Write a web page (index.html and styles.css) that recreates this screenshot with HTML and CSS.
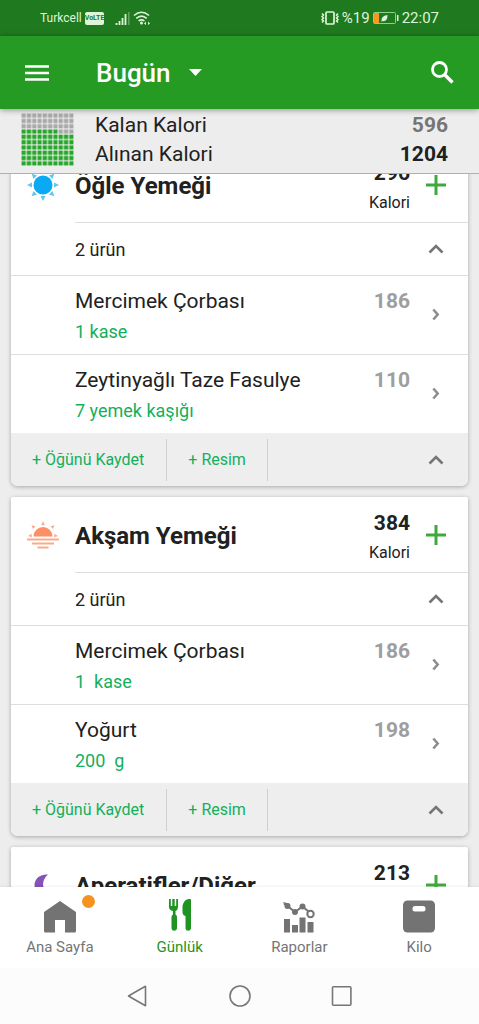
FILE: index.html
```html
<!DOCTYPE html>
<html lang="tr">
<head>
<meta charset="utf-8">
<meta name="viewport" content="width=device-width, initial-scale=1">
<title>Bugün</title>
<link rel="stylesheet" href="styles.css">
</head>
<body>
<svg class="defs" aria-hidden="true">
  <symbol id="up" viewBox="0 0 16 10"><path d="M1.500 8.500 8 2l6.500 6.500" fill="none" stroke="currentColor" stroke-width="2.600"/></symbol>
  <symbol id="next" viewBox="0 0 8 13"><path d="M1.300 1.500 5.700 6.500l-4.400 5" fill="none" stroke="currentColor" stroke-width="2.500"/></symbol>
  <symbol id="plus" viewBox="0 0 20 20"><path d="M10 0v20M0 10h20" fill="none" stroke="currentColor" stroke-width="3"/></symbol>
</svg>

<div class="status">
  <div class="status-group">
    <span class="carrier">Turkcell</span>
    <span class="volte">VoLTE</span>
    <svg class="signal" width="15" height="14" viewBox="0 0 15 14"><path d="M1.500 14v-2M4.500 14v-4M7.500 14V7M10.500 14V3" stroke="#dff5d8" stroke-width="1.800"/><path d="M13.800 14V1" stroke="#6aa668" stroke-width="1.400"/></svg>
    <svg class="wifi" width="17" height="14" viewBox="0 0 17 14"><g fill="none" stroke="#dff5d8" stroke-width="1.600"><path d="M1 4.500q7.500-6.500 15 0M3.300 7.400q5.200-4.600 10.400 0M5.600 10q2.900-2.400 5.800 0"/></g><circle cx="8.500" cy="12" r="1.500" fill="#dff5d8"/><path d="M11 12.500 13 10.500v3.500zM17 12.500 15 10.500v3.500z" fill="#dff5d8"/></svg>
  </div>
  <div class="status-group clock">
    <svg width="18" height="14" viewBox="0 0 18 14"><rect x="5" y="1" width="8" height="12" rx="1" fill="none" stroke="#dff5d8" stroke-width="1.700"/><path d="M1 2.500l1.500 1.500L1 5.500 2.500 7 1 8.500 2.500 10 1 11.500M17 2.500 15.500 4 17 5.500 15.500 7 17 8.500 15.500 10 17 11.500" fill="none" stroke="#dff5d8" stroke-width="1.500"/></svg>
    <span>%19</span>
    <svg class="battery" width="26" height="12" viewBox="0 0 26 12"><rect x=".5" y=".5" width="22" height="11" rx="1" fill="none" stroke="#8fce8b"/><rect x="1" y="1" width="5" height="10" fill="#f39a22"/><path d="M8.500 10q-1-6 6-7 0 7-5 6z" fill="#dff5d8"/><path d="M24.700 3v6" stroke="#dff5d8" stroke-width="1.500"/></svg>
    <span>22:07</span>
  </div>
</div>

<header class="appbar">
  <button class="plain" aria-label="Menü"><svg width="24" height="16" viewBox="0 0 24 16"><path d="M0 1.500h24M0 8h24M0 14.500h24" stroke="#fff" stroke-width="2.600"/></svg></button>
  <button class="plain day">Bugün <svg width="13" height="7" viewBox="0 0 13 7"><path d="M0 0h13L6.500 7z" fill="#fff"/></svg></button>
  <button class="plain search" aria-label="Ara"><svg width="23" height="23" viewBox="0 0 23 23"><circle cx="8.500" cy="8.500" r="7" fill="none" stroke="#fff" stroke-width="2.800"/><path d="M13.500 13.500l8 8" stroke="#fff" stroke-width="3.400"/></svg></button>
</header>

<section class="summary">
  <svg width="53" height="53" viewBox="0 0 100 100">
    <defs>
      <pattern id="left" width="10" height="10" patternUnits="userSpaceOnUse"><rect x="1" y="1" width="8" height="8" fill="#a9a9a9"/></pattern>
      <pattern id="eaten" width="10" height="10" patternUnits="userSpaceOnUse"><rect x="1" y="1" width="8" height="8" fill="#27a82a"/></pattern>
    </defs>
    <path d="M0 0h100v40H70V30H0z" fill="url(#left)"/>
    <path d="M0 30h70v10h30v60H0z" fill="url(#eaten)"/>
  </svg>
  <dl class="totals">
    <div><dt>Kalan Kalori</dt><dd class="remaining">596</dd></div>
    <div><dt>Alınan Kalori</dt><dd>1204</dd></div>
  </dl>
</section>

<main class="diary">
  <div class="cards">
    <article class="card">
      <header class="meal">
        <span class="meal-icon"><svg width="32" height="32" viewBox="-16 -16 32 32"><circle r="9.500" fill="#0aa9f4"/><g fill="#62c5ee"><path id="ray" d="M-2.500-11h5L0-16z"/><use href="#ray" transform="rotate(45)"/><use href="#ray" transform="rotate(90)"/><use href="#ray" transform="rotate(135)"/><use href="#ray" transform="rotate(180)"/><use href="#ray" transform="rotate(225)"/><use href="#ray" transform="rotate(270)"/><use href="#ray" transform="rotate(315)"/></g></svg></span>
        <div class="meal-main"><h2>Öğle Yemeği</h2><p class="kcal"><b>296</b>Kalori</p><button class="plain action add" aria-label="Ekle"><svg width="20" height="20"><use href="#plus"/></svg></button></div>
      </header>
      <div class="count"><span>2 ürün</span><button class="plain action" aria-label="Daralt"><svg width="16" height="10"><use href="#up"/></svg></button></div>
      <a class="food" href="#"><span class="name">Mercimek Çorbası</span><span class="value">186</span><span class="portion">1 kase</span><svg class="next" width="8" height="13"><use href="#next"/></svg></a>
      <a class="food" href="#"><span class="name">Zeytinyağlı Taze Fasulye</span><span class="value">110</span><span class="portion">7 yemek kaşığı</span><svg class="next" width="8" height="13"><use href="#next"/></svg></a>
      <footer class="tools"><button class="plain save">+ Öğünü Kaydet</button><button class="plain photo">+ Resim</button><button class="plain action" aria-label="Kapat"><svg width="16" height="10"><use href="#up"/></svg></button></footer>
    </article>

    <article class="card">
      <header class="meal">
        <span class="meal-icon"><svg width="32" height="28" viewBox="0 0 32 28"><path d="M6.500 15.500a9.500 9.500 0 0 1 19 0z" fill="#ff8f66"/><path d="M0 18.500h32M5 22.500h22M10.500 26.500h11" stroke="#f8ab8e" stroke-width="1.800"/><g fill="#f8ab8e"><path d="M14.200 4.300h3.600L16 0zM5.900 8.100l2.500-2.500L4.500 4zM26.100 8.100l-2.500-2.500L27.500 4zM4.700 12.800v3.400L1 15zM27.300 12.800v3.400L31 15z"/></g></svg></span>
        <div class="meal-main"><h2>Akşam Yemeği</h2><p class="kcal"><b>384</b>Kalori</p><button class="plain action add" aria-label="Ekle"><svg width="20" height="20"><use href="#plus"/></svg></button></div>
      </header>
      <div class="count"><span>2 ürün</span><button class="plain action" aria-label="Daralt"><svg width="16" height="10"><use href="#up"/></svg></button></div>
      <a class="food" href="#"><span class="name">Mercimek Çorbası</span><span class="value">186</span><span class="portion">1&nbsp; kase</span><svg class="next" width="8" height="13"><use href="#next"/></svg></a>
      <a class="food" href="#"><span class="name">Yoğurt</span><span class="value">198</span><span class="portion">200&nbsp; g</span><svg class="next" width="8" height="13"><use href="#next"/></svg></a>
      <footer class="tools"><button class="plain save">+ Öğünü Kaydet</button><button class="plain photo">+ Resim</button><button class="plain action" aria-label="Kapat"><svg width="16" height="10"><use href="#up"/></svg></button></footer>
    </article>

    <article class="card">
      <header class="meal">
        <span class="meal-icon"><svg width="18" height="22" viewBox="0 0 18 22"><path d="M14 .5C5 0 .5 5.500.5 11S6 22 17 20C9 18 5.500 8 14 .5z" fill="#8552b8"/></svg></span>
        <div class="meal-main"><h2>Aperatifler/Diğer</h2><p class="kcal"><b>213</b>Kalori</p><button class="plain action add" aria-label="Ekle"><svg width="20" height="20"><use href="#plus"/></svg></button></div>
      </header>
    </article>
  </div>
</main>

<nav class="tabs">
  <a href="#" class="tab home"><svg width="32" height="34" viewBox="0 0 32 34"><path d="M0 13 16 2l16 11v19q0 1.500-1.500 1.500H21V21H11v12.500H1.500Q0 33.500 0 32z" fill="#737373"/></svg><span class="badge"></span>Ana Sayfa</a>
  <a href="#" class="tab active"><svg width="24" height="34" viewBox="0 0 24 34"><g fill="#1f9423"><path d="M1 0h1.800v7h1.500V0h2.400v7h1.500V0H10v8q0 3-2.500 4v3.500Q9 16 9 18v11.500a2.800 2.800 0 0 1-5.500 0V18q0-2 1.500-2.500V12Q1 11 1 8z"/><path d="M23 1v28.500a2.800 2.800 0 0 1-5.500 0V17q-3-.5-3-4V7q1-6 6-7Q23-.5 23 1z"/></g></svg>Günlük</a>
  <a href="#" class="tab"><svg width="32" height="34" viewBox="0 0 32 34"><path d="M1 20h6v13.500H1zM9 26h6v7.500H9zM16.500 18.500h6v15h-6zM24.500 23h6v10.500h-6z" fill="#737373"/><path d="M1 4.500 4.500 7l7.500 6 7.500-5.500 6 5" fill="none" stroke="#737373" stroke-width="2"/><path d="M0 3l6 1.500V9H3z" fill="#737373"/><g fill="#737373"><circle cx="4.500" cy="7" r="3"/><circle cx="12" cy="13" r="3"/><circle cx="19.500" cy="7.500" r="3"/></g><circle cx="27.500" cy="15" r="3.200" fill="#fff" stroke="#737373" stroke-width="2"/></svg>Raporlar</a>
  <a href="#" class="tab"><svg width="32" height="34" viewBox="0 0 32 34"><rect y="1.500" width="32" height="32" rx="4.500" fill="#737373"/><rect x="9.500" y="7" width="13" height="5.500" rx="2.500" fill="#fff"/></svg>Kilo</a>
</nav>

<div class="system">
  <button class="plain" aria-label="Geri"><svg width="22" height="22" viewBox="0 0 22 22"><path d="M18.500 1.300v19.400Q10 16 1.500 11 10 6 18.500 1.300z" fill="none" stroke="#777" stroke-width="1.600" stroke-linejoin="round"/></svg></button>
  <button class="plain" aria-label="Ana ekran"><svg width="22" height="22" viewBox="0 0 22 22"><circle cx="11" cy="11" r="10" fill="none" stroke="#777" stroke-width="1.600"/></svg></button>
  <button class="plain" aria-label="Son uygulamalar"><svg width="22" height="22" viewBox="0 0 22 22"><rect x="1.500" y="1.800" width="18.400" height="18.400" rx="1" fill="none" stroke="#777" stroke-width="1.600"/></svg></button>
</div>
</body>
</html>
```
FILE: styles.css
```css
* { box-sizing: border-box; }
body {
  margin: 0;
  height: 100vh;
  display: flex;
  flex-direction: column;
  background: #ededed;
  color: #212121;
  font-family: Roboto, "Noto Sans", sans-serif;
}
svg { display: block; flex: none; }
a { color: inherit; text-decoration: none; }
h2, p, dl, dd { margin: 0; }
.defs { position: absolute; width: 0; height: 0; }
.plain {
  display: flex;
  align-items: center;
  justify-content: center;
  padding: 0;
  border: 0;
  background: none;
  color: inherit;
  font: inherit;
}

.status {
  flex: none;
  height: 36px;
  padding: 0 40px;
  display: flex;
  align-items: center;
  justify-content: space-between;
  background: #1f7a1f;
  color: #dff5d8;
  font-size: 12px;
}
.status-group { display: flex; align-items: center; gap: 3px; }
.clock { font-size: 15px; }
.volte {
  border-radius: 2px;
  background: #dff5d8;
  color: #1f7a1f;
  font-size: 7px;
  font-weight: 700;
  line-height: 13px;
}
.signal { margin-left: 8px; }

.appbar {
  position: relative;
  flex: none;
  height: 73px;
  padding: 0 25px;
  display: flex;
  align-items: center;
  background: #259b24;
  color: #fff;
  box-shadow: 0 1px 6px rgba(0, 0, 0, .4);
}
.day { margin-left: 47px; gap: 18px; font-size: 26px; font-weight: 500; }
.search { margin-left: auto; }

.summary {
  flex: none;
  height: 65px;
  padding: 0 31px 3px 21px;
  display: flex;
  align-items: center;
  gap: 21px;
  border-bottom: 1px solid #b0b0b0;
  font-size: 21px;
  line-height: 29px;
}
.totals { flex: 1; }
.totals div { display: flex; justify-content: space-between; }
.totals dd { font-weight: 700; }
.totals .remaining { color: #757575; }

.diary { flex: 1; min-height: 0; overflow: hidden; }
.cards {
  margin-top: -27px;
  padding: 0 11px;
  display: flex;
  flex-direction: column;
  gap: 11px;
}
.card {
  border-radius: 2px 2px 7px 7px;
  background: #fff;
  box-shadow: 0 1px 4px rgba(0, 0, 0, .3);
}
.action { width: 40px; height: 40px; margin-left: 6px; color: #757575; }
.add { color: #3faa3c; }
.meal { display: flex; height: 76px; }
.meal-icon { width: 64px; display: flex; align-items: center; justify-content: center; }
.meal-main {
  flex: 1;
  padding-right: 12px;
  display: flex;
  align-items: center;
  border-bottom: 1px solid #dedede;
}
.meal h2 { flex: 1; padding-top: 2px; font-size: 24px; font-weight: 700; line-height: 28px; }
.kcal { padding-top: 6px; text-align: right; font-size: 16px; line-height: 30px; }
.kcal b { display: block; font-size: 21px; }
.count {
  height: 53px;
  padding: 0 12px 0 64px;
  display: flex;
  align-items: center;
  justify-content: space-between;
  border-bottom: 1px solid #dedede;
  font-size: 18px;
}
.food {
  height: 78px;
  padding: 9px 28px 7px 64px;
  display: grid;
  grid-template-columns: 1fr auto 8px;
  grid-template-rows: 31px 31px;
  column-gap: 22px;
  align-items: center;
}
.food + .food { height: 79px; border-top: 1px solid #dedede; }
.name { font-size: 21px; }
.value { font-size: 21px; font-weight: 700; color: #9e9e9e; }
.portion { grid-row: 2; font-size: 18px; color: #13b05b; }
.next { grid-column: 3; grid-row: 1 / 3; margin-bottom: 3px; color: #8c8c8c; }
.tools {
  height: 53px;
  padding-right: 12px;
  display: flex;
  align-items: center;
  border-radius: 0 0 7px 7px;
  background: #eee;
  color: #13b05b;
  font-size: 16px;
}
.save, .photo { height: 42px; padding: 0 21px; border-right: 1px solid #cfcfcf; }
.save { padding-right: 22px; }
.tools .action { margin-left: auto; }

.tabs {
  flex: none;
  height: 81px;
  display: grid;
  grid-template-columns: repeat(4, 1fr);
  position: relative;
  background: #fff;
  box-shadow: 0 -1px 2px rgba(0, 0, 0, .06);
}
.tab {
  position: relative;
  padding-top: 12px;
  display: flex;
  flex-direction: column;
  align-items: center;
  gap: 5px;
  color: #757575;
  font-size: 15px;
  line-height: 18px;
}
.active { color: #1f9423; }
.badge {
  position: absolute;
  top: 8px;
  left: calc(50% + 22px);
  width: 13px;
  height: 13px;
  border-radius: 50%;
  background: #f6921e;
}
.system {
  flex: none;
  height: 56px;
  display: flex;
  align-items: center;
  justify-content: center;
  gap: 80px;
  background: #fcfcfc;
}
```
